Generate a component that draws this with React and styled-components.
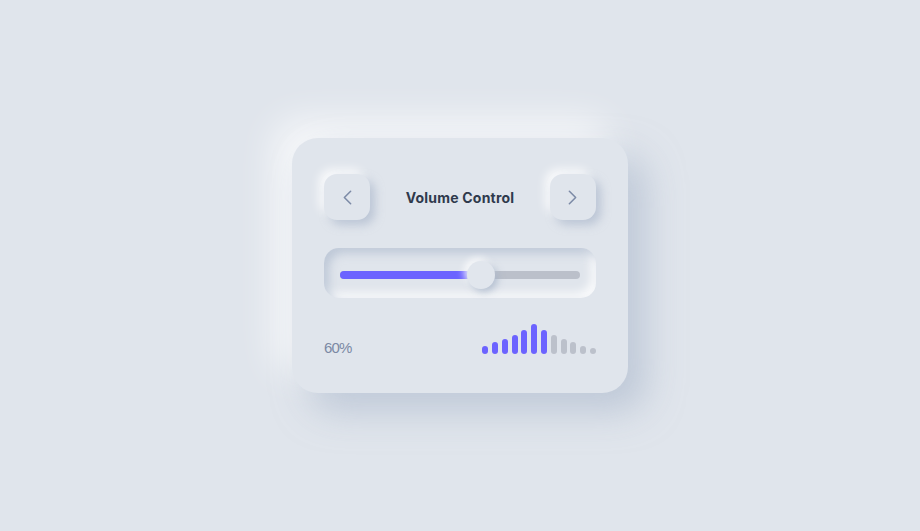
import React from "react";
import styled, { createGlobalStyle } from "styled-components";
import { ChevronLeft, ChevronRight } from "lucide-react";

const Global = createGlobalStyle`
  html, body { margin: 0; padding: 0; background: #e0e5ec; }
  body { font-family: Inter, "Noto Sans", sans-serif; }
`;

const Page = styled.div`
  width: 920px;
  height: 531px;
  display: flex;
  align-items: center;
  justify-content: center;
  background: #e0e5ec;
`;

const Card = styled.div`
  width: 336px;
  height: 255px;
  box-sizing: border-box;
  padding: 36px 32px 39px;
  border-radius: 26px;
  background: #e0e5ec;
  box-shadow: 18px 18px 36px rgba(163, 177, 198, 0.55),
    -18px -18px 36px rgba(255, 255, 255, 0.75);
  display: flex;
  flex-direction: column;
`;

const Header = styled.div`
  height: 46px;
  display: flex;
  align-items: center;
  justify-content: space-between;
`;

const NavButton = styled.button`
  width: 46px;
  height: 46px;
  border: none;
  padding: 0;
  border-radius: 13px;
  background: #e0e5ec;
  color: #7c8aa6;
  display: flex;
  align-items: center;
  justify-content: center;
  box-shadow: 5px 5px 10px rgba(163, 177, 198, 0.6),
    -5px -5px 10px rgba(255, 255, 255, 0.8);
`;

const Title = styled.h1`
  margin: 0;
  font-family: Inter, "Noto Sans", sans-serif;
  font-size: 14px;
  font-weight: 700;
  color: #2f3a4c;
  letter-spacing: 0.2px;
`;

const Track = styled.div`
  margin-top: 28px;
  height: 50px;
  box-sizing: border-box;
  padding: 4px 16px 0;
  border-radius: 15px;
  background: #e0e5ec;
  box-shadow: inset 5px 5px 10px rgba(163, 177, 198, 0.55),
    inset -5px -5px 10px rgba(255, 255, 255, 0.85);
  display: flex;
  align-items: center;
`;

const Rail = styled.div`
  position: relative;
  flex: 1;
  height: 8px;
  border-radius: 4px;
  background: #bbc0ca;
`;

const Fill = styled.div`
  position: absolute;
  left: 0;
  top: 0;
  bottom: 0;
  border-radius: 4px;
  background: linear-gradient(90deg, #6c63ff 0%, #6c63ff 86%, rgba(140, 132, 255, 0.35) 100%);
`;

const Thumb = styled.div`
  position: absolute;
  top: 50%;
  width: 28px;
  height: 28px;
  border-radius: 50%;
  background: #e1e6ed;
  transform: translate(-50%, -50%);
  box-shadow: 3px 3px 7px rgba(163, 177, 198, 0.7),
    -3px -3px 7px rgba(255, 255, 255, 0.85);
`;

const Footer = styled.div`
  margin-top: 26px;
  height: 30px;
  display: flex;
  align-items: flex-end;
  justify-content: space-between;
`;

const Percent = styled.span`
  font-family: "Liberation Sans", Arial, sans-serif;
  font-size: 15px;
  line-height: 15px;
  color: #7b89a4;
  letter-spacing: -0.9px;
  margin-bottom: -1px;
`;

const Bars = styled.div`
  display: flex;
  align-items: flex-end;
  gap: 3.8px;
`;

const Bar = styled.div`
  width: 6px;
  height: ${(p) => p.$h}px;
  border-radius: 3px;
  background: ${(p) => (p.$on ? "#6c63ff" : "#bcc1cb")};
`;

const heights = [8, 12, 15, 19, 24, 30, 24, 19, 15, 12, 8, 6];
const value = 58.8;

export default function App() {
  return (
    <>
      <Global />
      <Page>
        <Card>
          <Header>
            <NavButton aria-label="previous">
              <ChevronLeft size={25} strokeWidth={1.5} />
            </NavButton>
            <Title>Volume Control</Title>
            <NavButton aria-label="next">
              <ChevronRight size={25} strokeWidth={1.5} />
            </NavButton>
          </Header>
          <Track>
            <Rail>
              <Fill style={{ width: `${value + 2}%` }} />
              <Thumb style={{ left: `${value}%` }} />
            </Rail>
          </Track>
          <Footer>
            <Percent>60%</Percent>
            <Bars>
              {heights.map((h, i) => (
                <Bar key={i} $h={h} $on={i < 7} />
              ))}
            </Bars>
          </Footer>
        </Card>
      </Page>
    </>
  );
}
